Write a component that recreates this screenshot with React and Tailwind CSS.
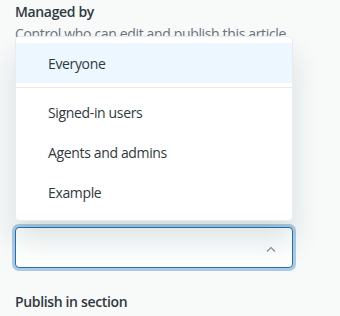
import React from 'react';

const options = ['Signed-in users', 'Agents and admins', 'Example'];

const ManagedByField = () => {
    return (
        <div className="relative min-h-[316px] w-[340px] overflow-hidden bg-[#f8f9f9] px-[15px] pt-[2px] text-[14px] tracking-[-0.35px] text-[#2f3941]" style={{ fontFamily: '"Open Sans", "Noto Sans", sans-serif' }}>
            {/* Label + hint */}
            <div className="font-semibold leading-5">Managed by</div>
            <div className="leading-5 mt-[2px] text-[#68737d]">Control who can edit and publish this article</div>

            {/* Select (open) */}
            <div className="mt-[183px] flex h-[41px] w-[278px] items-center justify-end rounded-[4px] border border-[#1f73b7] bg-white pr-[16px] shadow-[0_0_0_3px_rgba(31,115,183,0.35)]">
                <svg width="10" height="6" viewBox="0 0 10 6" fill="none" className="mt-[2px]">
                    <path d="M1 5.5 L5 1.5 L9 5.5" stroke="#87929d" strokeWidth="1.2" />
                </svg>
            </div>

            <div className="mt-[24px] font-semibold leading-5">Publish in section</div>

            {/* Menu popover */}
            <div className="absolute left-[15px] top-[36px] w-[278px] rounded-[4px] border border-[#e9ebed] bg-white pt-[6px] pb-[8px] shadow-[0_20px_28px_0_rgba(23,73,77,0.15)]">
                <div className="flex h-10 items-center bg-[#edf7ff] pl-[32px]">Everyone</div>
                <div className="my-[4px] h-px bg-[#e9ebed]" />
                {options.map((opt) => (
                    <div key={opt} className="flex h-10 items-center pl-[32px]">{opt}</div>
                ))}
            </div>
        </div>
    );
};

export default function App() {
    return <ManagedByField />;
}
